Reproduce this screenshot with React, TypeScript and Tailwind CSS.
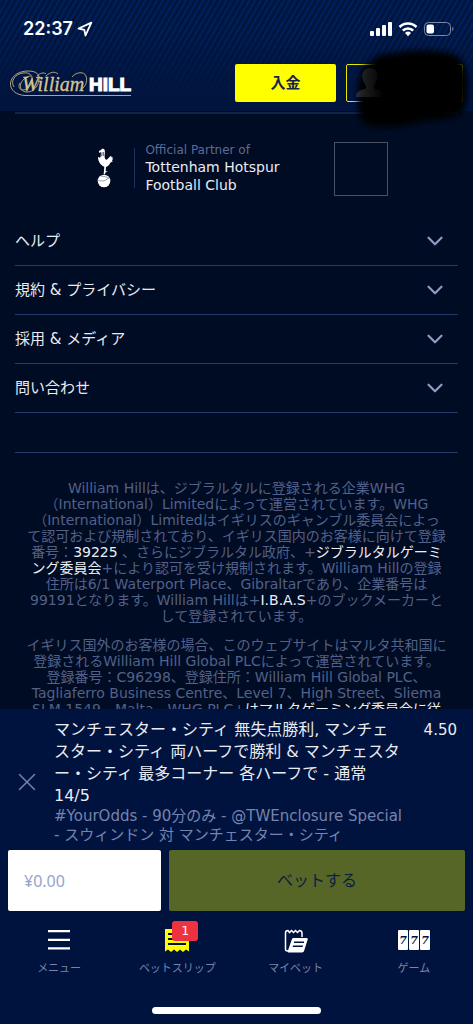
import { ReactNode } from 'react'
import { ChevronDown, X } from 'lucide-react'

const menuItems = ['ヘルプ', '規約 & プライバシー', '採用 & メディア', '問い合わせ']

const App = () => {
  return (
    <div className="flex h-screen flex-col overflow-hidden bg-[#000c24] font-['DejaVu_Sans','Noto_Sans_CJK_JP',sans-serif] text-[#e9ebf1]">
      <Header />
      <main className="min-h-0 flex-1 overflow-hidden px-[15px] pt-px">
        <Partner />
        <nav>
          {menuItems.map((item) => (
            <MenuItem key={item} label={item} />
          ))}
        </nav>
        <div className="h-10 border-b border-[#263a67]" />
        <Legal />
      </main>
      <footer className="bg-[#00133e]">
        <BetSlip />
        <TabBar />
      </footer>
    </div>
  )
}

export default App

const Header = () => (
  <header className="relative z-10 bg-[#00143e]">
    <div className="bg-[linear-gradient(to_bottom,transparent_20%,#00143e_92%),repeating-linear-gradient(120deg,#001f5a_0px,#001f5a_2px,#00143c_3px,#00143c_5px)]">
      <div className="flex h-[58px] items-center justify-between pr-[18px] pl-[23px]">
        <div className="flex items-center gap-1 text-white">
          <span className="font-['Inter',sans-serif] text-lg font-semibold">
            22:37
          </span>
          <svg className="size-4" viewBox="0 0 16 16" fill="none">
            <path
              d="M14.3 1.6 1.6 7.5l5.7 1.3 1.2 5.7z"
              stroke="currentColor"
              strokeWidth="1.8"
              strokeLinejoin="round"
            />
          </svg>
        </div>
        <StatusIcons />
      </div>
      <div className="flex h-[53px] items-start justify-between pt-1.5 pr-2.5 pl-2">
        <Logo />
        <div className="flex gap-2.5">
          <button className="h-[38px] w-[101px] rounded-xs bg-[#ffff00] text-[15px] font-bold text-[#14234a]">
            入金
          </button>
          <button
            aria-label="アカウント"
            className="relative h-[38px] w-[117px] rounded-xs border border-[#e8e800]"
          >
            <AccountCover />
          </button>
        </div>
      </div>
    </div>
  </header>
)

const StatusIcons = () => (
  <svg className="h-4 w-[85px]" viewBox="0 0 85 16" fill="#fff">
    <rect x="0" y="10" width="4" height="5" rx="1" />
    <rect x="6" y="7" width="4" height="8" rx="1" />
    <rect x="12" y="4" width="4" height="11" rx="1" />
    <rect x="18" y="1" width="4" height="14" rx="1" />
    <g fill="none" stroke="#fff" strokeWidth="2.6">
      <path d="M29.5 6a12 12 0 0 1 17 0" />
      <path d="M32.8 9.6a7.4 7.4 0 0 1 10.4 0" />
    </g>
    <path d="M38 15.2l-3-3.2a4.4 4.4 0 0 1 6 0z" />
    <rect
      x="54.5"
      y="1.5"
      width="26"
      height="13"
      rx="4"
      fill="none"
      stroke="#7d88a6"
    />
    <rect x="56.5" y="3.5" width="7.5" height="9" rx="2" />
    <path d="M82.3 5.8a2.6 2.6 0 0 1 0 4.4z" fill="#7d88a6" />
  </svg>
)

const Logo = () => (
  <svg
    className="mt-1 h-[30px] w-[126px]"
    viewBox="0 0 126 30"
    role="img"
    aria-label="William Hill"
  >
    <g fill="none" stroke="#b5a27a" strokeWidth="1">
      <path d="M123 27.500H17C8 27 2 22 2.500 15 3.500 7 12 3 20 3c8 0 12 3 11 9-1 7-6 12-12 12-5 0-8-4-6-9 2-4 6-7 10-7" />
      <path d="M6 19C2 13 7 6 15 5c6-1 10 2 9 7-1 6-5 10-9 10-4 0-5-4-3-7" />
      <path d="M29 8c3-3 7-4 9-2M38 8c4-4 9-5 12-2M64 9c4-5 12-6 14-1 2 6-1 12-7 15" />
    </g>
    <text
      x="14"
      y="23"
      fill="#d8c493"
      stroke="#d8c493"
      strokeWidth=".3"
      fontFamily="Liberation Serif, serif"
      fontSize="20"
      fontStyle="italic"
    >
      William
    </text>
    <text
      x="81"
      y="23"
      fill="#fff"
      stroke="#fff"
      strokeWidth="1.2"
      fontFamily="Liberation Sans, sans-serif"
      fontSize="19"
      fontWeight="700"
    >
      HILL
    </text>
  </svg>
)

const AccountCover = () => (
  <svg
    className="absolute -top-5 -left-1 h-[88px] w-[134px]"
    viewBox="0 0 134 88"
  >
    <defs>
      <filter id="soft" x="-10%" y="-10%" width="120%" height="120%">
        <feGaussianBlur stdDeviation="3" />
      </filter>
      <linearGradient id="fade">
        <stop offset="0" stopColor="#505050" />
        <stop offset="1" stopColor="#000" />
      </linearGradient>
    </defs>
    <path
      d="M28 17C32 8 46 9 58 7c22-3 47-1 56 4 9 6 11 18 11 29-1 15-2 25-8 29-12 7-28 5-44 9-18 5-43 6-51 1-8-6-7-16-7-29 0-17 2-29 13-33z"
      fill="#000"
      filter="url(#soft)"
    />
    <path
      d="M13 52c0-5 4-7 9-8 2-1 1-3 0-5-5-7-3-16 5-16s10 9 5 16c-1 2-2 4 0 5 5 1 9 3 9 8z"
      fill="url(#fade)"
      opacity=".5"
    />
  </svg>
)

const Partner = () => (
  <section className="flex justify-center border-t-2 border-[#12234a] pt-7 pb-[21px] pl-3">
    <Cockerel />
    <div className="mt-1.5 mr-2.5 ml-5 h-10 w-px bg-[#1e3262]" />
    <div className="text-sm leading-[18px]">
      <p className="text-xs leading-4 text-[#5d6a96]">Official Partner of</p>
      <p>
        Tottenham Hotspur
        <br />
        Football Club
      </p>
    </div>
    <div className="ml-[54px] size-[54px] border border-[#485064]" />
  </section>
)

const Cockerel = () => (
  <svg
    className="mt-1.5 h-10 w-[17px]"
    viewBox="0 0 51 120"
    fill="#fff"
    role="img"
    aria-label="Tottenham Hotspur"
  >
    <path d="M6 9 12 6c2-5 9-5 11 0 2 7-1 13 0 22 1 7 5 9 9 5 4-3 5-9 12-9l-2 4 6-1-3 4 4 2-4 3 2 5c-4 0-6 2-8 5-3 7-7 9-12 11l-1 13 7-1-7 4-2 6h-4l2-23C13 52 3 43 3 26l4 3 4-2 1-14-6 1z" />
    <path d="M15 13l-1 12M19 12v12" stroke="#000c24" strokeWidth="2" />
    <circle cx="21" cy="99" r="19" />
    <path
      d="M3 96c12 6 26 2 34-8M11 84c8 2 20 1 25 8"
      fill="none"
      stroke="#667088"
      strokeWidth="2"
    />
  </svg>
)

const MenuItem = ({ label }: { label: string }) => (
  <button className="flex h-[49px] w-full items-center justify-between border-b border-[#263a67] pr-2.5 text-[15px]">
    {label}
    <ChevronDown className="size-[26px] text-[#8f9cc4]" />
  </button>
)

const LegalLink = ({ children }: { children: ReactNode }) => (
  <a href="#" className="text-[#eceef4]">
    {children}
  </a>
)

const Legal = () => (
  <section className="flex flex-col gap-[13px] pt-[27px] text-center text-[14px] leading-4 whitespace-nowrap text-[#536088]">
    <p>
      William Hillは、ジブラルタルに登録される企業WHG
      <br />
      （International）Limitedによって運営されています。WHG
      <br />
      （International）Limitedはイギリスのギャンブル委員会によっ
      <br />
      て認可および規制されており、イギリス国内のお客様に向けて登録
      <br />
      番号：<LegalLink>39225</LegalLink> 、さらにジブラルタル政府、+
      <LegalLink>
        ジブラルタルゲーミ
        <br />
        ング委員会
      </LegalLink>
      +により認可を受け規制されます。William Hillの登録
      <br />
      住所は6/1 Waterport Place、Gibraltarであり、企業番号は
      <br />
      99191となります。William Hillは+<LegalLink>I.B.A.S</LegalLink>
      +のブックメーカーと
      <br />
      して登録されています。
    </p>
    <p>
      イギリス国外のお客様の場合、このウェブサイトはマルタ共和国に
      <br />
      登録されるWilliam Hill Global PLCによって運営されています。
      <br />
      登録番号：C96298、登録住所：William Hill Global PLC、
      <br />
      Tagliaferro Business Centre、Level 7、High Street、Sliema
      <br />
      SLM 1549、Malta。WHG PLC+<LegalLink>はマルタゲーミング委員会に従</LegalLink>
    </p>
  </section>
)

const BetSlip = () => (
  <form className="px-2" onSubmit={(e) => e.preventDefault()}>
    <div className="flex pt-2.5 pb-[5px]">
      <button
        type="button"
        aria-label="削除"
        className="flex w-[46px] items-center pl-1 text-[#7482ad]"
      >
        <X className="size-[30px]" strokeWidth={1.2} />
      </button>
      <div className="min-w-0 flex-1">
        <p className="text-base leading-[22px] whitespace-nowrap">
          マンチェスター・シティ 無失点勝利, マンチェ
          <br />
          スター・シティ 両ハーフで勝利 & マンチェスタ
          <br />
          ー・シティ 最多コーナー 各ハーフで - 通常
          <br />
          14/5
        </p>
        <p className="text-[15px] leading-[19px] whitespace-nowrap text-[#7583ae]">
          #YourOdds - 90分のみ - @TWEnclosure Special
          <br />- スウィンドン 対 マンチェスター・シティ
        </p>
      </div>
      <span className="pr-2 text-[15px] leading-[22px]">4.50</span>
    </div>
    <div className="flex gap-2">
      <input
        aria-label="賭け金"
        placeholder="¥0.00"
        className="h-[61px] w-[153px] rounded-xs bg-white px-4 font-['Noto_Sans',sans-serif] text-base text-[#14234a] placeholder:text-[#96a3cc]"
      />
      <button className="h-[61px] flex-1 rounded-xs bg-[#566627] text-base text-[#0c2040]">
        ベットする
      </button>
    </div>
  </form>
)

const TabBar = () => (
  <nav className="pb-2.5">
    <div className="grid h-24 grid-cols-4">
      <Tab label="メニュー">
        <svg className="h-6 w-[22px]" viewBox="0 0 22 24" fill="#fff">
          <path d="M0 1h22v2.300H0zM0 9.700h22V12H0zM0 18.300h22v2.300H0z" />
        </svg>
      </Tab>
      <Tab label="ベットスリップ" badge={1}>
        <svg className="size-6" viewBox="0 0 24 24">
          <path
            d="M0 0h24v22.500l-3-2-3 2.500-3-2.500-3 2.500-3-2.500-3 2.500-3-2.500-3 2z"
            fill="#ffff00"
          />
          <path
            d="M3 5h18M3 10h18M3 15h18"
            stroke="#00133e"
            strokeWidth="2"
          />
        </svg>
      </Tab>
      <Tab label="マイベット">
        <svg className="size-6" viewBox="0 0 24 24">
          <path
            d="M7 22H3.500C2 22 1.500 21 1.500 20V4c0-1.500 1-2.500 2.500-2.500l1.500 2 2-2 2 2 2-2 2 2 2-2c2 0 2.500 1 2.500 3V8"
            fill="none"
            stroke="#fff"
            strokeWidth="1.500"
          />
          <path
            d="M10 9h12.500c1 0 1.500.7 1.200 1.600l-3.500 11C19.800 23 19 23.500 18 23.500H5c-1 0-1.500-.6-1.200-1.600l4-11.500C8.200 9.500 9 9 10 9z"
            fill="#fff"
          />
          <path
            d="M10 13.200h10M8.800 17.200h10"
            stroke="#00133e"
            strokeWidth="1.500"
          />
        </svg>
      </Tab>
      <Tab label="ゲーム">
        <svg className="h-6 w-8" viewBox="0 0 32 24">
          {[0, 11, 22].map((x) => (
            <g key={x}>
              <rect x={x} y="1" width="10" height="20" rx="1" fill="#fff" />
              <text
                x={x + 5}
                y="15"
                textAnchor="middle"
                fill="#00133e"
                fontFamily="DejaVu Serif, serif"
                fontSize="11"
                fontStyle="italic"
                fontWeight="700"
              >
                7
              </text>
            </g>
          ))}
        </svg>
      </Tab>
    </div>
    <div className="mx-auto h-[7px] w-[169px] rounded-full bg-white" />
  </nav>
)

type TabProps = {
  label: string
  badge?: number
  children: ReactNode
}

const Tab = ({ label, badge, children }: TabProps) => (
  <a
    href="#"
    className="flex flex-col items-center gap-2 pt-[18px] text-[11px] leading-4 text-[#7886ae]"
  >
    <span className="relative">
      {children}
      {badge && (
        <span className="absolute -top-2 left-[7px] flex h-5 w-[26px] items-center justify-center rounded-[3px] bg-[#ee3340] text-xs text-white">
          {badge}
        </span>
      )}
    </span>
    {label}
  </a>
)
